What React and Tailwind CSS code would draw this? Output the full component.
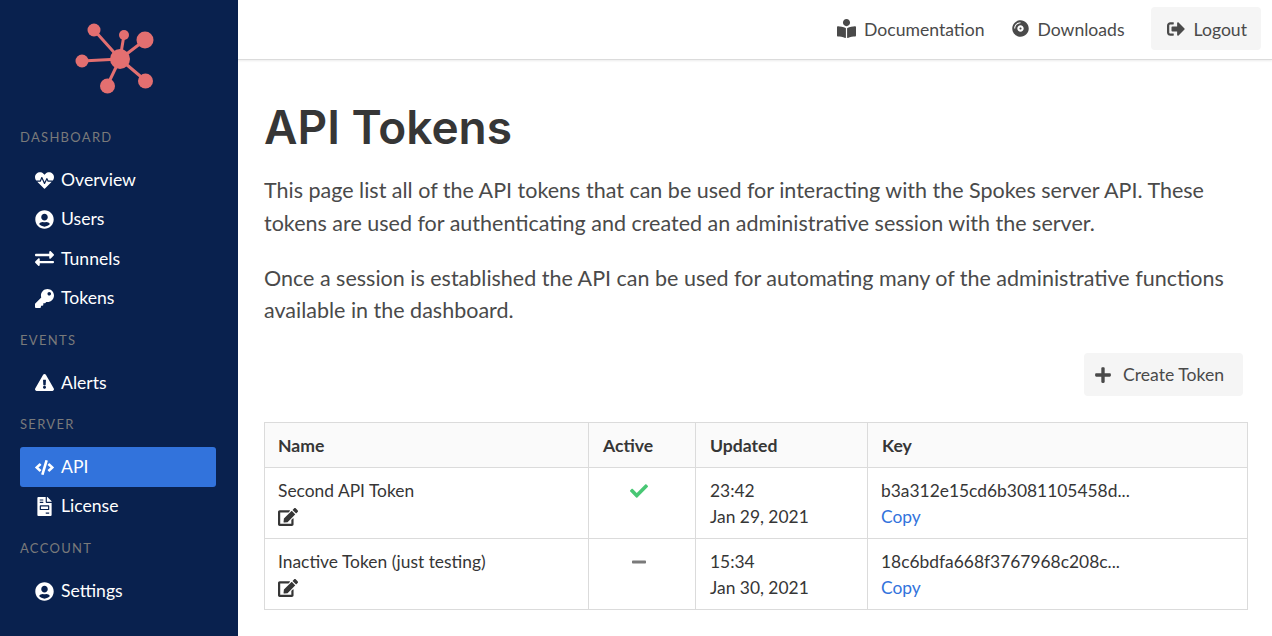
import {
  FaBookReader,
  FaCheck,
  FaCode,
  FaCompactDisc,
  FaEdit,
  FaExchangeAlt,
  FaExclamationTriangle,
  FaFileInvoice,
  FaHeartbeat,
  FaKey,
  FaMinus,
  FaPlus,
  FaSignOutAlt,
  FaUserCircle,
} from "react-icons/fa";

const menu = [
  {
    label: "Dashboard",
    items: [
      { name: "Overview", icon: FaHeartbeat },
      { name: "Users", icon: FaUserCircle },
      { name: "Tunnels", icon: FaExchangeAlt },
      { name: "Tokens", icon: FaKey },
    ],
  },
  { label: "Events", items: [{ name: "Alerts", icon: FaExclamationTriangle }] },
  {
    label: "Server",
    items: [
      { name: "API", icon: FaCode, active: true },
      { name: "License", icon: FaFileInvoice },
    ],
  },
  { label: "Account", items: [{ name: "Settings", icon: FaUserCircle }] },
];

const tokens = [
  { name: "Second API Token", active: true, time: "23:42", date: "Jan 29, 2021", key: "b3a312e15cd6b3081105458d..." },
  { name: "Inactive Token (just testing)", active: false, time: "15:34", date: "Jan 30, 2021", key: "18c6bdfa668f3767968c208c..." },
];

const Logo = () => (
  <svg width="84" height="76" viewBox="74 20 84 76" fill="#e36f70" stroke="#e36f70" strokeWidth="3">
    <path d="M120 59 94 30M120 59 124 35M120 59 145 40M120 59 82 61M120 59 107 86M120 59 146 81" fill="none" />
    <circle cx="120" cy="59" r="10" stroke="none" />
    <circle cx="94" cy="30" r="6.5" stroke="none" />
    <circle cx="124" cy="35" r="5" stroke="none" />
    <circle cx="145" cy="40" r="8.5" stroke="none" />
    <circle cx="82" cy="61" r="6.5" stroke="none" />
    <circle cx="107.5" cy="86" r="7.5" stroke="none" />
    <circle cx="145.5" cy="81" r="7.5" stroke="none" />
  </svg>
);

const Sidebar = () => (
  <aside className="w-[238px] shrink-0 h-screen bg-[#09214e] pl-5 pr-[22px] overflow-hidden">
    <div className="pt-[20px] pl-[54px] h-[126px]">
      <Logo />
    </div>
    {menu.map((group) => (
      <div key={group.label} className="mb-[11px]">
        <p className="pt-[1px] text-[13px] leading-[21px] tracking-[1.3px] uppercase text-[#7a7a7a] mb-[12.2px]">{group.label}</p>
        <ul>
          {group.items.map((item) => (
            <li key={item.name} className="mb-[-0.67px]">
              <a
                className={`flex items-center h-[40px] pl-[14px] rounded-[3px] text-[17.6px] text-white ${item.active ? "bg-[#3273dc]" : ""}`}
              >
                <span className="w-[20px] flex justify-center">
                  <item.icon className="text-[19px]" />
                </span>
                <span className="ml-[7px]">{item.name}</span>
              </a>
            </li>
          ))}
        </ul>
      </div>
    ))}
  </aside>
);

const TopBar = () => (
  <nav className="h-[60px] flex items-start pt-[7px] text-[17.6px] text-[#4a4a4a] justify-end pr-[11px] border-b border-[#dbdbdb] shadow-[0_1px_2px_rgba(0,0,0,0.08)]">
    <a className="flex items-center gap-[8px] h-[43px]">
      <FaBookReader className="text-[19px]" />
      <span className="pt-[4px]">Documentation</span>
    </a>
    <a className="flex items-center gap-[8px] h-[43px] ml-[28px]">
      <FaCompactDisc className="text-[17px]" />
      <span className="pt-[4px]">Downloads</span>
    </a>
    <a className="flex items-center gap-[9px] h-[43px] ml-[26px] pl-[16px] pr-[14px] bg-[#f5f5f5] rounded-[4px]">
      <FaSignOutAlt className="text-[18px]" />
      <span className="pt-[4px]">Logout</span>
    </a>
  </nav>
);

const TokenTable = () => (
  <table className="w-[984px] table-fixed border-collapse text-[17.4px] leading-[26px] text-[#363636]">
    <thead>
      <tr className="bg-[#fafafa] font-bold text-[17.6px]">
        <th className="w-[324px] h-[45px] border border-[#dbdbdb] pt-[2px] px-[13px] text-left">Name</th>
        <th className="w-[107px] border border-[#dbdbdb] pt-[2px] px-[14px] text-left">Active</th>
        <th className="w-[172px] border border-[#dbdbdb] pt-[2px] px-[14px] text-left">Updated</th>
        <th className="border border-[#dbdbdb] pt-[2px] px-[14px] text-left">Key</th>
      </tr>
    </thead>
    <tbody>
      {tokens.map((token) => (
        <tr key={token.name}>
          <td className="h-[71px] border border-[#dbdbdb] pt-[2px] px-[13px] align-middle">
            <div>{token.name}</div>
            <div className="h-[26px] flex items-center">
              <FaEdit className="text-[20px]" />
            </div>
          </td>
          <td className="border border-[#dbdbdb] align-top pt-[10px] pr-[7px]">
            <div className="h-[26px] flex items-center justify-center">
              {token.active ? (
                <FaCheck className="text-[18px] text-[#48c774]" />
              ) : (
                <FaMinus className="text-[16px] text-[#7a7a7a]" />
              )}
            </div>
          </td>
          <td className="border border-[#dbdbdb] pt-[2px] px-[14px] align-middle">
            <div>{token.time}</div>
            <div>{token.date}</div>
          </td>
          <td className="border border-[#dbdbdb] pt-[2px] px-[13px] align-middle">
            <div>{token.key}</div>
            <a className="text-[#3273dc]">Copy</a>
          </td>
        </tr>
      ))}
    </tbody>
  </table>
);

const App = () => (
  <div className="flex h-screen overflow-hidden bg-white font-['Lato',sans-serif]">
    <Sidebar />
    <main className="flex-1 min-w-0">
      <TopBar />
      <div className="pl-[26px] pr-[24px]">
        <h1 className="mt-[38px] text-[46px] leading-[58px] font-semibold text-[#363636] font-['Inter',sans-serif]">API Tokens</h1>
        <div className="mt-[18px] text-[21.5px] leading-[32.6px] text-[#4a4a4a]">
          <p>
            This page list all of the API tokens that can be used for interacting with the Spokes server API. These
            tokens are used for authenticating and created an administrative session with the server.
          </p>
          <p className="mt-[22.4px]">
            Once a session is established the API can be used for automating many of the administrative functions
            available in the dashboard.
          </p>
        </div>
        <div className="flex justify-end mt-[26.6px] pr-[5px]">
          <button className="flex items-center gap-[11px] h-[43px] pl-[10px] pr-[19px] bg-[#f5f5f5] rounded-[4px] text-[17.6px] text-[#4a4a4a]">
            <FaPlus className="text-[18px]" />
            Create Token
          </button>
        </div>
        <div className="mt-[26px]">
          <TokenTable />
        </div>
      </div>
    </main>
  </div>
);

export default App;
